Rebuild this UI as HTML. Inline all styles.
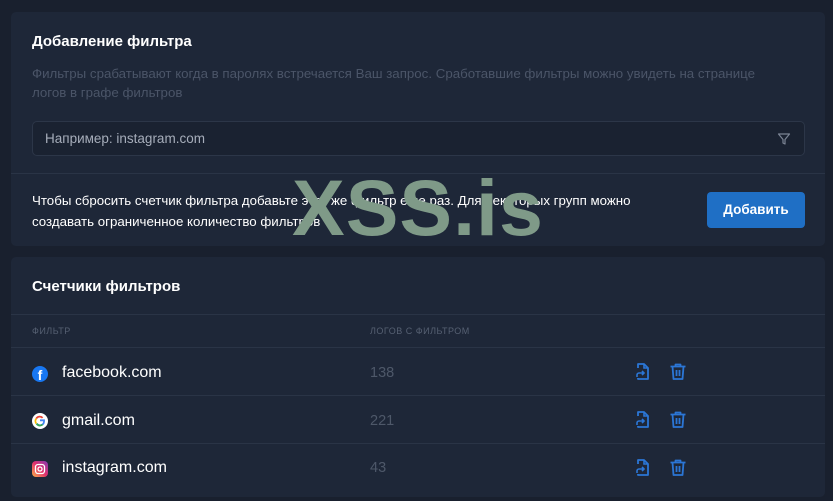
<!DOCTYPE html>
<html><head><meta charset="utf-8"><style>
*{margin:0;padding:0;box-sizing:border-box}
body{width:833px;height:501px;background:#19202e;font-family:"Liberation Sans","DejaVu Sans",sans-serif;position:relative;overflow:hidden;color:#fff}
.card{position:absolute;left:11px;width:814px;background:#1e2738;border-radius:5px}
.abs{position:absolute}
.line{position:absolute;left:0;right:0;height:1px;background:#2a3446}
</style></head><body>
<div class="card" style="top:12px;height:234px">
 <div class="abs" style="left:21px;top:21px;font-size:15px;font-weight:bold">Добавление фильтра</div>
 <div class="abs" style="left:21px;top:52px;width:740px;font-size:13.3px;line-height:19px;color:#4b5568">Фильтры срабатывают когда в паролях встречается Ваш запрос. Сработавшие фильтры можно увидеть на странице логов в графе фильтров</div>
 <div class="abs" style="left:21px;top:109px;width:773px;height:35px;border:1px solid #2c3648;border-radius:5px;background:#1a2231">
  <div class="abs" style="left:12px;top:9px;font-size:13.5px;color:#a6adba">Например: instagram.com</div>
  <svg class="abs" style="left:744px;top:10px" width="14" height="14" viewBox="0 0 14 14"><path d="M1.5 2h11L8 7.5V12L6 11V7.5Z" fill="none" stroke="#7b8494" stroke-width="1.2" stroke-linejoin="round"/></svg>
 </div>
 <div class="line" style="top:161px"></div>
 <div class="abs" style="left:21px;top:178px;width:640px;font-size:13.3px;line-height:21px;color:#fff">Чтобы сбросить счетчик фильтра добавьте этот же фильтр еще раз. Для некоторых групп можно создавать ограниченное количество фильтров</div>
 <div class="abs" style="left:696px;top:180px;width:98px;height:36px;background:#1f6fc5;border-radius:4px;font-size:13.5px;font-weight:bold;text-align:center;line-height:36px">Добавить</div>
</div>
<div class="card" style="top:257px;height:240px">
 <div class="abs" style="left:21px;top:21px;font-size:15px;font-weight:bold">Счетчики фильтров</div>
 <div class="line" style="top:57px"></div>
 <div class="abs" style="left:21px;top:69px;font-size:9px;color:#566072;letter-spacing:.5px">ФИЛЬТР</div>
 <div class="abs" style="left:359px;top:69px;font-size:9px;color:#566072;letter-spacing:.5px">ЛОГОВ С ФИЛЬТРОМ</div>
 <div class="line" style="top:90px"></div>
 <div class="line" style="top:138px"></div>
 <div class="line" style="top:186px"></div>
</div>
<div class="abs" style="left:32px;top:366px;width:16px;height:16px;border-radius:50%;background:#1877f2;color:#fff;font-weight:bold;font-size:14px;line-height:19px;text-align:center;overflow:hidden">f</div>
<div class="abs" style="left:62px;top:364px;font-size:16px">facebook.com</div>
<div class="abs" style="left:370px;top:365px;font-size:14.5px;color:#4e5869">138</div>
<svg class="abs" style="left:32px;top:413px" width="16" height="16" viewBox="0 0 16 16"><circle cx="8" cy="8" r="8" fill="#fff"/><path d="M8 7.3h4v1.4a4 4 0 0 1-7.2 2" fill="none" stroke="#4285f4" stroke-width="1.8"/><path d="M4.3 10.5a4 4 0 0 1 0-5" fill="none" stroke="#fbbc05" stroke-width="1.8"/><path d="M4.3 5.5a4 4 0 0 1 6.3-.6" fill="none" stroke="#ea4335" stroke-width="1.8"/><path d="M4.6 10.6a4 4 0 0 0 6 .9" fill="none" stroke="#34a853" stroke-width="1.8"/></svg>
<div class="abs" style="left:62px;top:412px;font-size:16px">gmail.com</div>
<div class="abs" style="left:370px;top:413px;font-size:14.5px;color:#4e5869">221</div>
<svg class="abs" style="left:32px;top:461px" width="16" height="16" viewBox="0 0 16 16"><defs><linearGradient id="ig" x1="0" y1="1" x2="1" y2="0"><stop offset="0" stop-color="#fdb34a"/><stop offset=".5" stop-color="#e1306c"/><stop offset="1" stop-color="#833ab4"/></linearGradient></defs><rect width="16" height="16" rx="4" fill="url(#ig)"/><rect x="3.5" y="3.5" width="9" height="9" rx="2.5" fill="none" stroke="#fff" stroke-width="1.3"/><circle cx="8" cy="8" r="2" fill="none" stroke="#fff" stroke-width="1.3"/></svg>
<div class="abs" style="left:62px;top:459px;font-size:16px">instagram.com</div>
<div class="abs" style="left:370px;top:460px;font-size:14.5px;color:#4e5869">43</div>
<svg width="0" height="0" style="position:absolute"><defs>
<g id="doc"><path d="M4 6V2h6l4 4v11H4v-1" fill="none" stroke="#2b76d6" stroke-width="1.8" stroke-linejoin="round"/><path d="M10 2v4h4" fill="none" stroke="#2b76d6" stroke-width="1.6"/><path d="M3 15v-2a2 2 0 0 1 2-2h5M8 9l2 2-2 2" fill="none" stroke="#2b76d6" stroke-width="1.6"/></g>
<g id="trash"><path d="M1.5 4.5h15M6.5 4.5V2.5h5v2M3.5 4.5l1 12.5h9l1-12.5M7.5 8v6M10.5 8v6" fill="none" stroke="#2b76d6" stroke-width="1.8" stroke-linejoin="round"/></g>
</defs></svg>
<svg class="abs" style="left:634px;top:362px" width="18" height="20" viewBox="0 0 18 20"><use href="#doc"/></svg>
<svg class="abs" style="left:669px;top:362px" width="18" height="20" viewBox="0 0 18 20"><use href="#trash"/></svg>
<svg class="abs" style="left:634px;top:410px" width="18" height="20" viewBox="0 0 18 20"><use href="#doc"/></svg>
<svg class="abs" style="left:669px;top:410px" width="18" height="20" viewBox="0 0 18 20"><use href="#trash"/></svg>
<svg class="abs" style="left:634px;top:458px" width="18" height="20" viewBox="0 0 18 20"><use href="#doc"/></svg>
<svg class="abs" style="left:669px;top:458px" width="18" height="20" viewBox="0 0 18 20"><use href="#trash"/></svg>
<div class="abs" style="left:292px;top:166px;font-size:79px;font-weight:bold;color:#7f9a88;letter-spacing:1px;line-height:84px">XSS.is</div>
</body></html>
